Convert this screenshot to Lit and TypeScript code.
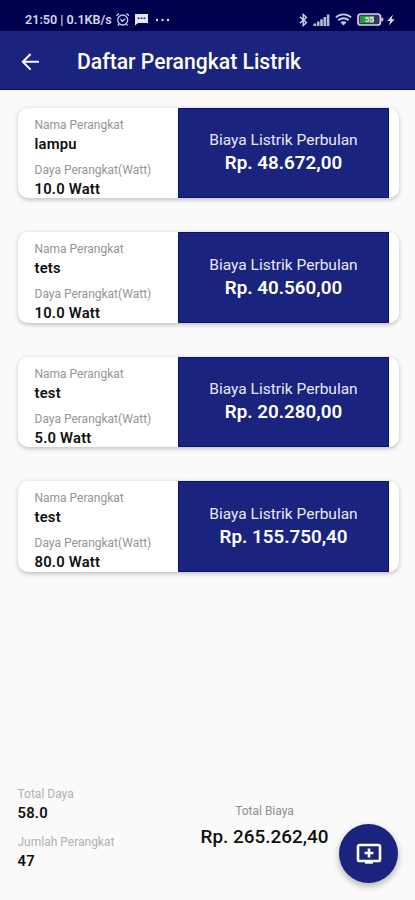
import { LitElement, html, css } from "lit";
import { customElement, property } from "lit/decorators.js";

interface Device {
  name: string;
  watt: string;
  cost: string;
}

const DEVICES: Device[] = [
  { name: "lampu", watt: "10.0 Watt", cost: "Rp. 48.672,00" },
  { name: "tets", watt: "10.0 Watt", cost: "Rp. 40.560,00" },
  { name: "test", watt: "5.0 Watt", cost: "Rp. 20.280,00" },
  { name: "test", watt: "80.0 Watt", cost: "Rp. 155.750,40" },
];

@customElement("status-bar")
export class StatusBar extends LitElement {
  static styles = css`
    :host {
      display: flex;
      align-items: center;
      height: 31px;
      box-sizing: border-box;
      padding: 8px 20px 0 25px;
      background: #00004f;
      color: #d6d6ee;
    }
    .clock {
      font-size: 12.6px;
      font-weight: 600;
      line-height: 16px;
      white-space: nowrap;
      width: 90px;
    }
    svg { display: block; flex: none; }
    .chat { margin-left: 4px; }
    .dots { margin-left: 6px; }
    .signal { margin-left: 5px; }
    .wifi { margin-left: 5px; }
    .battery { margin-left: 5px; }
    .bolt { margin-left: 3px; }
    .spacer { flex: 1; }
  `;

  render() {
    return html`
      <span class="clock">21:50 | 0.1KB/s</span>
      <svg width="15" height="15" viewBox="0 0 15 15" fill="none" stroke="#c9c9e6" stroke-width="1.3">
        <circle cx="7.7" cy="8" r="5"></circle>
        <path d="M1.4 3.8 4 1.6M14 3.8 11.4 1.6M5.4 7.4l2 1.9 2.8-2.5M4.2 12l-1.4 1.6M11.2 12l1.4 1.6"></path>
      </svg>
      <svg class="chat" width="15" height="13" viewBox="0 0 15 13">
        <path d="M1 1h13v9H4L1 12.6z" fill="#e6e6f6"></path>
        <path d="M3.6 5.2h1.8M6.6 5.2h1.8M9.6 5.2h1.8" stroke="#22226a" stroke-width="1.5"></path>
      </svg>
      <svg class="dots" width="16" height="4" viewBox="0 0 16 4" fill="#dedef2">
        <circle cx="2" cy="2" r="1.2"></circle>
        <circle cx="7.5" cy="2" r="1.2"></circle>
        <circle cx="13" cy="2" r="1.2"></circle>
      </svg>
      <span class="spacer"></span>
      <svg width="9" height="14" viewBox="0 0 9 14" fill="none" stroke="#d0d0ea" stroke-width="1.4">
        <path d="M.8 3.8 7.4 9.6 4.2 12.6V1.4l3.2 3L.8 10.2"></path>
      </svg>
      <svg class="signal" width="17" height="12" viewBox="0 0 17 12" fill="#b9b9dc">
        <path d="M.5 9.5h2.6V12H.5zM3.9 7.6h2.6V12H3.9zM7.2 5.2h2.6V12H7.2zM10.5 3h2.6v9h-2.6zM13.8.6h2.6V12h-2.6z"></path>
      </svg>
      <svg class="wifi" width="17" height="13" viewBox="0 0 17 13" fill="none" stroke="#c9c9e6" stroke-width="1.9">
        <path d="M.9 4.4c4.4-4 10.8-4 15.2 0M3.3 7.2c3-2.6 7.4-2.6 10.4 0"></path>
        <path d="M5.4 9.2c1.8-1.4 4.4-1.4 6.2 0l-3.1 3.2z" fill="#c9c9e6" stroke="none"></path>
      </svg>
      <svg class="battery" width="27" height="13" viewBox="0 0 27 13">
        <rect x="1" y="1" width="22.4" height="11" rx="2.8" fill="#34345f" stroke="#d4d4ea" stroke-width="1.7"></rect>
        <path d="M24.4 4.2q2 .4 2 2.3t-2 2.3z" fill="#d4d4ea"></path>
        <path d="M3 3h9v7H3z" fill="#2a9a28"></path>
        <path d="M12 3h5v7h-5z" fill="#6f8f80"></path>
        <text x="12.4" y="9.4" text-anchor="middle" font-size="8" font-weight="700" fill="#dcefdc">55</text>
      </svg>
      <svg class="bolt" width="8" height="12" viewBox="0 0 8 12" fill="#dcdcf0">
        <path d="M5.8.6.4 6.9h2.8L2 11.4l5.6-6.2H4.6z"></path>
      </svg>
    `;
  }
}

@customElement("device-card")
export class DeviceCard extends LitElement {
  @property({ attribute: false }) device!: Device;

  static styles = css`
    :host {
      display: flex;
      height: 90.6px;
      box-sizing: border-box;
      border-radius: 10px;
      overflow: hidden;
      background: #fff;
      box-shadow: 0 1.5px 4px rgba(0, 0, 0, 0.22);
    }
    .info {
      width: 160px;
      flex: none;
      box-sizing: border-box;
      padding: 9px 0 0 16.5px;
      white-space: nowrap;
    }
    .label {
      font-size: 12px;
      line-height: 17px;
      color: #959595;
    }
    .value {
      font-size: 14.8px;
      font-weight: 600;
      line-height: 20px;
      letter-spacing: 0.2px;
      color: #111;
    }
    .power { margin-top: 8px; }
    .cost {
      width: 211px;
      flex: none;
      box-sizing: border-box;
      padding-bottom: 1.5px;
      display: flex;
      flex-direction: column;
      align-items: center;
      justify-content: center;
      background: #1a237e;
      color: #fff;
      white-space: nowrap;
      box-shadow: inset 0 0 0 1px #0c1178;
    }
    .caption {
      font-size: 15.5px;
      line-height: 22px;
      color: #e8e9f8;
    }
    .amount {
      font-size: 18.8px;
      font-weight: 600;
      line-height: 24px;
    }
  `;

  render() {
    return html`
      <div class="info">
        <div class="label">Nama Perangkat</div>
        <div class="value">${this.device.name}</div>
        <div class="label power">Daya Perangkat(Watt)</div>
        <div class="value">${this.device.watt}</div>
      </div>
      <div class="cost">
        <div class="caption">Biaya Listrik Perbulan</div>
        <div class="amount">${this.device.cost}</div>
      </div>
    `;
  }
}

@customElement("app-root")
export class AppRoot extends LitElement {
  static styles = css`
    :host {
      display: flex;
      flex-direction: column;
      position: relative;
      height: 900px;
      overflow: hidden;
      background: #fafafa;
      font-family: Roboto, "Noto Sans", sans-serif;
    }
    status-bar { flex: none; }
    .appbar {
      flex: none;
      display: flex;
      align-items: center;
      height: 59px;
      box-sizing: border-box;
      padding: 3px 0 0 20px;
      background: #1a237e;
      border-bottom: 1.5px solid #0a0c78;
      color: #fff;
    }
    .appbar svg { display: block; }
    .title {
      margin: 1px 0 0 36px;
      font-size: 21.15px;
      font-weight: 500;
      line-height: 28px;
      white-space: nowrap;
    }
    .list {
      flex: 1;
      display: flex;
      flex-direction: column;
      gap: 34px;
      padding: 17.5px 16px 0 18px;
    }
    .summary {
      flex: none;
      display: flex;
      height: 114px;
      padding-left: 17.5px;
      white-space: nowrap;
    }
    .counts { width: 182.5px; }
    .label {
      font-size: 12px;
      line-height: 17px;
      color: #b0b0b0;
    }
    .value {
      font-size: 14.8px;
      font-weight: 600;
      line-height: 20px;
      letter-spacing: 0.2px;
      color: #111;
    }
    .devices { margin-top: 11px; }
    .total {
      display: flex;
      flex-direction: column;
      align-items: center;
      width: 129px;
      padding-top: 17px;
    }
    .total .label { color: #909090; }
    .sum {
      margin-top: 5px;
      font-size: 18.9px;
      font-weight: 500;
      line-height: 24px;
      color: #111;
    }
    .fab {
      position: absolute;
      right: 17px;
      bottom: 17px;
      width: 59px;
      height: 59px;
      padding: 0;
      border: 0;
      border-radius: 50%;
      display: grid;
      place-items: center;
      background: #1a237e;
      box-shadow: 0 3px 7px rgba(0, 0, 0, 0.3);
    }
  `;

  render() {
    return html`
      <status-bar></status-bar>
      <header class="appbar">
        <svg width="21" height="20" viewBox="0 0 21 20" fill="none" stroke="#fff" stroke-width="2">
          <path d="M19 9.8H3M10.6 2 2.8 9.8l7.8 7.8"></path>
        </svg>
        <h1 class="title">Daftar Perangkat Listrik</h1>
      </header>
      <main class="list">
        ${DEVICES.map((d) => html`<device-card .device=${d}></device-card>`)}
      </main>
      <footer class="summary">
        <div class="counts">
          <div class="label">Total Daya</div>
          <div class="value">58.0</div>
          <div class="label devices">Jumlah Perangkat</div>
          <div class="value">47</div>
        </div>
        <div class="total">
          <div class="label">Total Biaya</div>
          <div class="sum">Rp. 265.262,40</div>
        </div>
      </footer>
      <button class="fab" aria-label="Tambah perangkat">
        <svg width="26" height="22" viewBox="0 0 26 22" fill="none" stroke="#fff">
          <rect x="2" y="2" width="22" height="16" rx="1.6" stroke-width="2.6"></rect>
          <path d="M13 5.6v8.8M8.6 10h8.8" stroke-width="2.6"></path>
          <path d="M9 19.4h8" stroke-width="2.6"></path>
        </svg>
      </button>
    `;
  }
}
